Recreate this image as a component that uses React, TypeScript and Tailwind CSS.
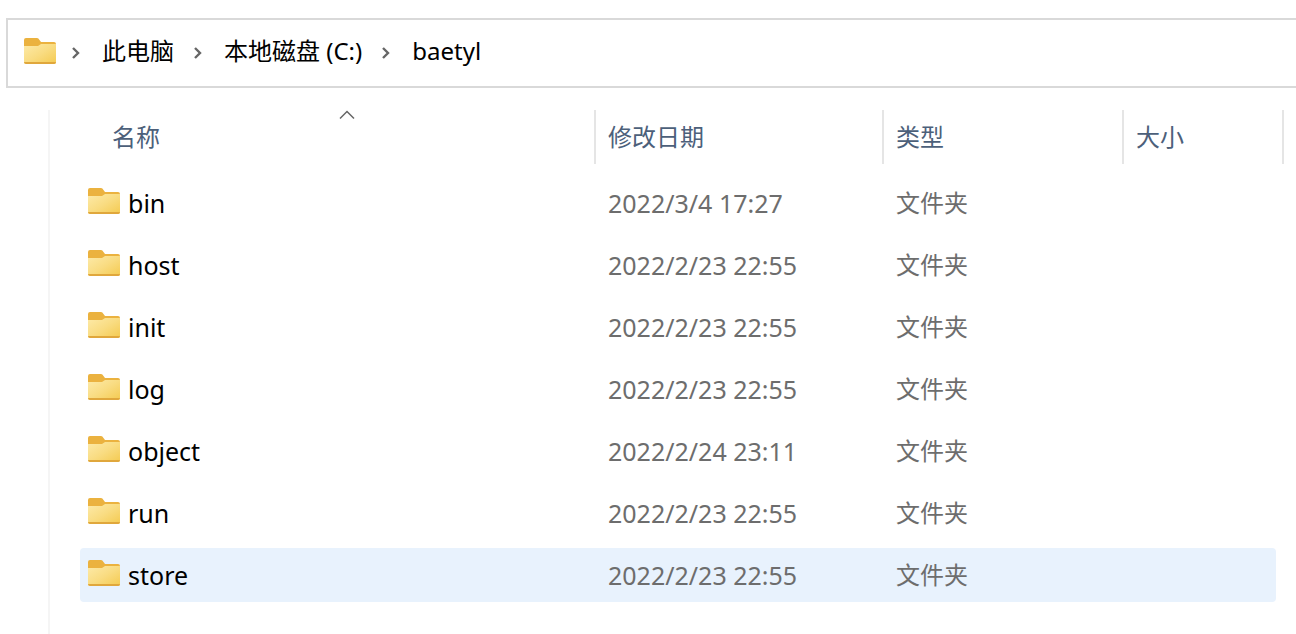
type Entry = { name: string; modified: string; selected?: boolean };

const entries: Entry[] = [
  { name: "bin", modified: "2022/3/4 17:27" },
  { name: "host", modified: "2022/2/23 22:55" },
  { name: "init", modified: "2022/2/23 22:55" },
  { name: "log", modified: "2022/2/23 22:55" },
  { name: "object", modified: "2022/2/24 23:11" },
  { name: "run", modified: "2022/2/23 22:55" },
  { name: "store", modified: "2022/2/23 22:55", selected: true },
];

const crumbs = ["此电脑", "本地磁盘 (C:)", "baetyl"];

const columns = [
  { label: "修改日期", width: "w-72" },
  { label: "类型", width: "w-60" },
  { label: "大小", width: "w-40" },
];

function FolderIcon() {
  return (
    <svg className="h-[26px] w-8 shrink-0" viewBox="0 0 32 26" aria-hidden="true">
      <defs>
        <linearGradient id="folder-front" x1="0" y1="0" x2="1" y2="1">
          <stop offset="0" stopColor="#fdeaa8" />
          <stop offset="0.5" stopColor="#f9dc82" />
          <stop offset="1" stopColor="#f4ca50" />
        </linearGradient>
      </defs>
      <path d="M0 2Q0 0 2 0H13Q14.5 0 15.5 2L17 4H30Q32 4 32 6V12H0Z" fill="#ebb23f" />
      <path d="M0 8H14L17 6H32V24Q32 26 30 26H2Q0 26 0 24Z" fill="url(#folder-front)" />
      <path d="M0 24H32Q32 26 30 26H2Q0 26 0 24Z" fill="#e0a73c" />
    </svg>
  );
}

function Chevron() {
  return (
    <svg className="h-3 w-2 shrink-0" viewBox="0 0 8 12" fill="none" stroke="#666666" strokeWidth="2.4" aria-hidden="true">
      <path d="M1 1L6 6L1 11" />
    </svg>
  );
}

export default function App() {
  return (
    <div className="flex min-h-screen flex-col overflow-x-hidden bg-white pt-[18px] font-['Noto_Sans','Noto_Sans_CJK_SC',sans-serif] text-2xl leading-8 text-black">
      <nav aria-label="路径" className="ml-1.5 flex h-[70px] items-center border-2 border-r-0 border-[#d9d9d9] pb-1 pl-4">
        <FolderIcon />
        <ol className="-ml-1 flex items-center">
          {crumbs.map((crumb) => (
            <li key={crumb} className="flex items-center">
              <span className="mr-[22px] ml-5 pt-1">
                <Chevron />
              </span>
              <a href="#" className="whitespace-nowrap">{crumb}</a>
            </li>
          ))}
        </ol>
      </nav>

      <main className="mt-[22px] ml-12 flex-1 border-l-2 border-[#f5f5f5] pr-3 pl-[30px]">
        <table className="w-full table-fixed border-collapse text-left">
          <thead className="text-[#4c607a]">
            <tr>
              <th className="relative p-0 pb-2 font-normal" aria-sort="ascending">
                <div className="flex h-[54px] items-center border-r-2 border-[#e5e5e5] pl-8">
                  <button type="button">名称</button>
                </div>
                <svg className="absolute top-0 left-[259px] h-2.5 w-4" viewBox="0 0 16 10" fill="none" stroke="#666666" strokeWidth="1.5" aria-hidden="true">
                  <path d="M1 8.5L8 1.5L15 8.5" />
                </svg>
              </th>
              {columns.map((column) => (
                <th key={column.label} className={`${column.width} p-0 pb-2 font-normal`}>
                  <div className="flex h-[54px] items-center border-r-2 border-[#e5e5e5] pl-3">
                    <button type="button">{column.label}</button>
                  </div>
                </th>
              ))}
            </tr>
          </thead>
          <tbody className="text-[#6d6d6d]">
            {entries.map((entry) => {
              const fill = entry.selected ? "bg-[#e8f2fd]" : "";
              return (
                <tr key={entry.name}>
                  <td className="px-0 py-1">
                    <a href="#" className={`flex h-[54px] items-center gap-2 rounded-l pl-2 text-[25px] text-black ${fill}`}>
                      <span className="pb-1">
                        <FolderIcon />
                      </span>
                      {entry.name}
                    </a>
                  </td>
                  <td className="px-0 py-1">
                    <div className={`flex h-[54px] items-center pl-3 text-[25px] ${fill}`}>{entry.modified}</div>
                  </td>
                  <td className="px-0 py-1">
                    <div className={`flex h-[54px] items-center pl-3 ${fill}`}>文件夹</div>
                  </td>
                  <td className="px-0 py-1">
                    <div className={`mr-2 h-[54px] rounded-r ${fill}`} />
                  </td>
                </tr>
              );
            })}
          </tbody>
        </table>
      </main>
    </div>
  );
}
